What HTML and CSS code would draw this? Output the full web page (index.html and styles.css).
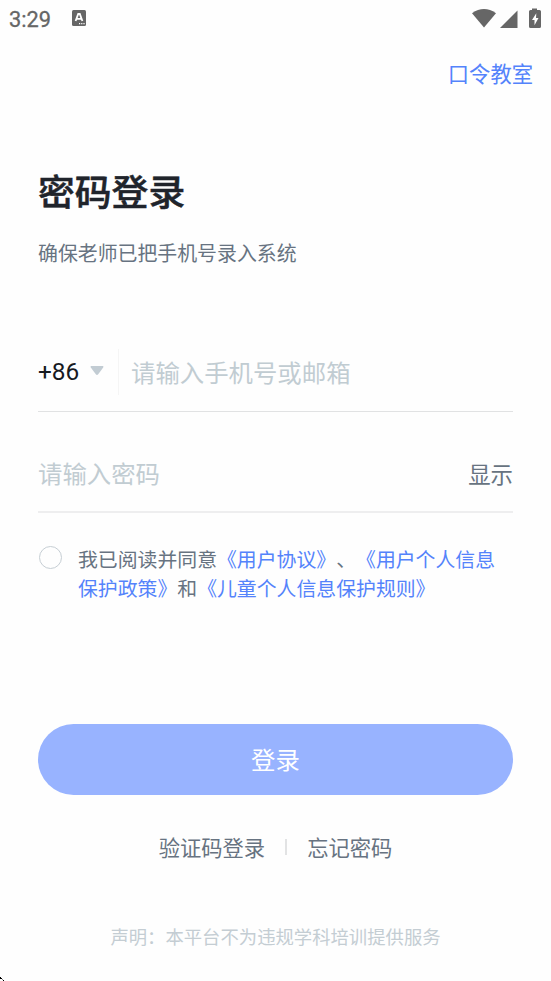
FILE: index.html
```html
<!DOCTYPE html>
<html lang="zh-CN">
<head>
<meta charset="utf-8">
<title>密码登录</title>
<link rel="stylesheet" href="styles.css">
</head>
<body>
<div class="screen">
  <header class="status">
    <span class="clock">3:29</span>
    <svg class="app-icon" width="14" height="16" viewBox="0 0 14 16"><rect width="14" height="16" rx="1.5" fill="#666"/><path d="M3.6 11 6.2 4h1.6l2.6 7M4.7 8.8h4.6" fill="none" stroke="#fff" stroke-width="1.8"/><path d="M7 13h1.2v1.2H7zM9.2 13h1.2v1.2H9.2zM11.4 13h1.2v1.2h-1.2z" fill="#fff"/></svg>
    <svg class="signals" width="70" height="21" viewBox="0 0 70 21">
      <path d="M0 5.2Q12 -3.2 24 5.2L12 19.5Z" fill="#666"/>
      <path d="M45.500 2.5V20H28Z" fill="#666"/>
      <path d="M57 3.500Q57 2 58.500 2H60V0.500H65V2H67.500Q69 2 69 3.500V18.500Q69 20 67.500 20H58.500Q57 20 57 18.500Z" fill="#666"/>
      <path d="M64.300 5.200 60 12H62.500V17.300L66.500 10.100H64Z" fill="#fff"/>
    </svg>
  </header>
  <nav class="top"><a>口令教室</a></nav>
  <main class="content">
    <h1>密码登录</h1>
    <p class="subtitle">确保老师已把手机号录入系统</p>
    <div class="field phone">
      <span class="code">+86</span>
      <svg class="caret" width="14" height="10" viewBox="0 0 14 10"><path d="M1.200 0H12.800Q14 .4 13.200 1.500L8.200 8.300Q7 9.500 5.800 8.300L.8 1.500Q0 .4 1.200 0Z" fill="#c2ccd3"/></svg>
      <span class="split"></span>
      <span class="hint">请输入手机号或邮箱</span>
    </div>
    <div class="field password">
      <span class="hint">请输入密码</span>
      <span class="show">显示</span>
    </div>
    <div class="agree">
      <span class="radio"></span>
      <p>我已阅读并同意<a>《用户协议》</a>、<a>《用户个人信息<br>保护政策》</a>和<a>《儿童个人信息保护规则》</a></p>
    </div>
    <button class="login">登录</button>
    <div class="links"><a>验证码登录</a><span class="bar"></span><a>忘记密码</a></div>
  </main>
  <footer>声明：本平台不为违规学科培训提供服务</footer>
  <svg class="pointer" width="4" height="4" viewBox="0 0 4 4" shape-rendering="crispEdges"><path d="M0 0h1v1H0zM1 1h1v1H1zM0 1h1v1H0zM3 3h1v1H3z" fill="#000"/><path d="M2 2h1v1H2z" fill="#888"/></svg>
</div>
</body>
</html>
```

FILE: styles.css
```css
* { box-sizing: border-box; }
body {
  margin: 0;
  background: #fefefe;
  color: #677381;
  font-family: "Noto Sans CJK SC", sans-serif;
  text-spacing-trim: space-all;
}
h1, p { margin: 0; }
.screen {
  position: relative;
  width: 551px;
  height: 981px;
  overflow: hidden;
  white-space: nowrap;
}
.status {
  display: flex;
  height: 40px;
  padding: 8px 9px 0;
}
.clock {
  width: 63px;
  color: #666;
  font: 400 21.8px/24px Roboto, sans-serif;
  -webkit-text-stroke: 0.3px #666;
}
.app-icon { margin-top: 2px; }
.signals { margin-left: auto; margin-right: 0; }
.top {
  height: 68px;
  padding: 17px 18px 0 0;
  text-align: right;
  font-size: 21.3px;
  line-height: 32px;
}
.top a, .agree a { color: #5483fb; }
.content { padding: 0 38px; }
h1 {
  height: 120px;
  padding-top: 54px;
  color: #20242b;
  font-size: 36.8px;
  font-weight: 500;
  line-height: 56px;
  -webkit-text-stroke: 0.5px #20242b;
}
.subtitle {
  height: 104px;
  padding-top: 10px;
  font-size: 19.9px;
  line-height: 30px;
}
.field { display: flex; align-items: center; }
.phone {
  height: 80px;
  border-bottom: 1px solid #e1e2e3;
}
.code {
  width: 52px;
  color: #171a1f;
  font: 24.4px/30px Roboto, sans-serif;
}
.caret { margin: 0 0 1px; }
.split {
  width: 1px;
  height: 46px;
  margin: 0 12px 0 14px;
  background: #f5f5f5;
}
.hint { color: #c1ccd2; font-size: 24.4px; }
.password {
  justify-content: space-between;
  height: 101px;
  padding-top: 22px;
  border-bottom: 2px solid #eeeeef;
}
.show { font-size: 22.4px; }
.agree {
  display: flex;
  height: 211px;
  padding-top: 31px;
  font-size: 19.87px;
  line-height: 29px;
}
.radio {
  width: 23px;
  height: 23px;
  margin: 2px 16px 0 1px;
  border: 1px solid #c6ced4;
  border-radius: 50%;
}
.login {
  display: block;
  width: 475px;
  height: 71px;
  padding: 0 0 2px;
  border: 0;
  border-radius: 36px;
  background: #98b3ff;
  color: #fff;
  font: 24.4px/36px "Noto Sans CJK SC", sans-serif;
}
.links {
  display: flex;
  align-items: center;
  justify-content: center;
  height: 105px;
  padding-bottom: 2px;
  font-size: 21.3px;
}
.bar {
  width: 2px;
  height: 16px;
  margin: 0 20px;
  background: #e2e3e4;
}
footer {
  padding-top: 22px;
  color: #c4cdd3;
  font-size: 18.35px;
  line-height: 28px;
  text-align: center;
}
.pointer { position: absolute; left: 0; bottom: 0; }
```
